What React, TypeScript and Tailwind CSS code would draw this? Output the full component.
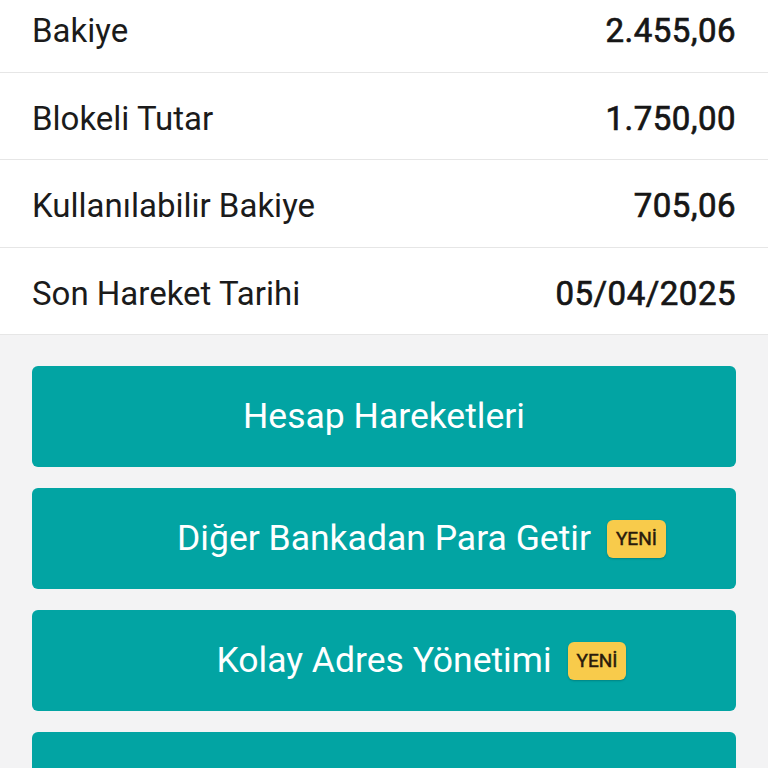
const ROWS: { label: string; value: string }[] = [
  { label: "Bakiye", value: "2.455,06" },
  { label: "Blokeli Tutar", value: "1.750,00" },
  { label: "Kullanılabilir Bakiye", value: "705,06" },
  { label: "Son Hareket Tarihi", value: "05/04/2025" },
];

const ACTIONS: { label: string; isNew?: boolean }[] = [
  { label: "Hesap Hareketleri" },
  { label: "Diğer Bankadan Para Getir", isNew: true },
  { label: "Kolay Adres Yönetimi", isNew: true },
  { label: "Hesap Kapama" },
];

export default function App() {
  return (
    <div className="h-[768px] w-[768px] overflow-hidden bg-[#f3f3f4] font-['Roboto','Noto_Sans',sans-serif]">
      {/* account summary list (scrolled a little) */}
      <div className="-mt-[15px] bg-white">
        {ROWS.map((row) => (
          <div
            key={row.label}
            className="flex h-[87.5px] items-center justify-between border-b border-[#e6e6e6] px-8 pt-[5px]"
          >
            <span className="text-[33px] text-[#1b1b1b]">{row.label}</span>
            {/* medium weight: regular face thickened a little */}
            <span className="text-[33px] tracking-[0.5px] text-[#161616] [-webkit-text-stroke:0.7px_#161616]">
              {row.value}
            </span>
          </div>
        ))}
      </div>

      {/* action buttons */}
      <div className="flex flex-col gap-[21px] px-8 pt-[31px]">
        {ACTIONS.map((a) => (
          <button
            key={a.label}
            className="flex h-[101px] w-full shrink-0 items-center justify-center rounded-[6px] bg-[#02a4a3] text-white"
          >
            <span className="relative text-[35.5px] leading-none">
              {a.label}
              {a.isNew && (
                <span className="absolute left-full top-1/2 ml-4 flex h-[38px] -translate-y-1/2 items-center rounded-[6px] bg-[#f8cb4b] px-[9px] text-[19px] text-[#2a1b0c] shadow-[0_1px_2px_rgba(0,0,0,0.2)] [-webkit-text-stroke:0.5px_#2a1b0c]">
                  YENİ
                </span>
              )}
            </span>
          </button>
        ))}
      </div>
    </div>
  );
}
